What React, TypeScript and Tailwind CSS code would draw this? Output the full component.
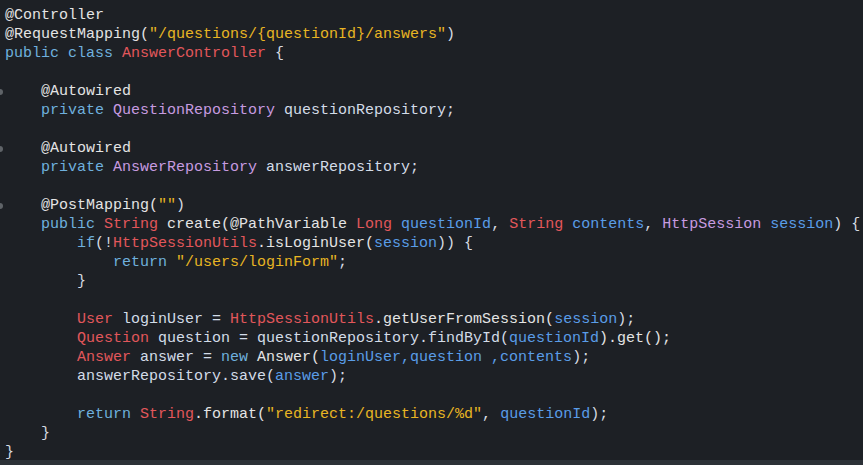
type Tok = [string, string]

// token colours
const an = "text-[#e4e4e4]"
const kw = "text-[#6fb0de]"
const ty = "text-[#e2575b]"
const rp = "text-[#c79be0]"
const vr = "text-[#5a9de8]"
const dv = "text-[#d3dce8]"
const st = "text-[#e8b523]"
const pn = "text-[#d6dbe2]"

const lines: Tok[][] = [
  [["@Controller", an]],
  [["@RequestMapping(", an], ["\"/questions/{questionId}/answers\"", st], [")", pn]],
  [["public class ", kw], ["AnswerController", ty], [" {", pn]],
  [],
  [["    @Autowired", an]],
  [["    private ", kw], ["QuestionRepository", rp], [" questionRepository", dv], [";", pn]],
  [],
  [["    @Autowired", an]],
  [["    private ", kw], ["AnswerRepository", rp], [" answerRepository", dv], [";", pn]],
  [],
  [["    @PostMapping(", an], ["\"\"", st], [")", pn]],
  [
    ["    public ", kw], ["String", ty], [" create(@PathVariable ", an], ["Long", ty],
    [" questionId", vr], [", ", pn], ["String", ty], [" contents", vr], [", ", pn],
    ["HttpSession", rp], [" session", vr], [") {", pn],
  ],
  [["        if", kw], ["(!", pn], ["HttpSessionUtils", ty], [".isLoginUser(", an], ["session", vr], [")) {", pn]],
  [["            return ", kw], ["\"/users/loginForm\"", st], [";", pn]],
  [["        }", pn]],
  [],
  [["        User", ty], [" loginUser = ", dv], ["HttpSessionUtils", ty], [".getUserFromSession(", an], ["session", vr], [");", pn]],
  [["        Question", ty], [" question = questionRepository.findById(", dv], ["questionId", vr], [").get();", an]],
  [["        Answer", ty], [" answer = ", dv], ["new ", kw], ["Answer(", an], ["loginUser,question ,contents", vr], [");", pn]],
  [["        answerRepository.save(", dv], ["answer", vr], [");", pn]],
  [],
  [["        return ", kw], ["String", ty], [".format(", an], ["\"redirect:/questions/%d\"", st], [", ", pn], ["questionId", vr], [");", pn]],
  [["    }", pn]],
  [["}", pn]],
]

const folds = [4, 7, 10]

function App() {
  return (
    <div className="w-[863px] h-[465px] bg-[#1d2025] flex flex-col overflow-hidden">
      <div className="h-[460px] overflow-hidden pt-[6px] font-['Liberation_Mono',monospace] text-[15px] leading-[19px] whitespace-pre">
        {lines.map((line, i) => (
          <div key={i} className="h-[19px] flex">
            {/* fold marker */}
            <div className="w-[5px] flex items-center">
              {folds.includes(i) && <span className="w-[3px] h-[6px] rounded-r-full bg-[#5f6368]" />}
            </div>
            <div>
              {line.map((t, j) => (
                <span key={j} className={t[1]}>{t[0]}</span>
              ))}
            </div>
          </div>
        ))}
      </div>
      <div className="h-[5px] bg-[#2c3137]" />
    </div>
  )
}

export default App
